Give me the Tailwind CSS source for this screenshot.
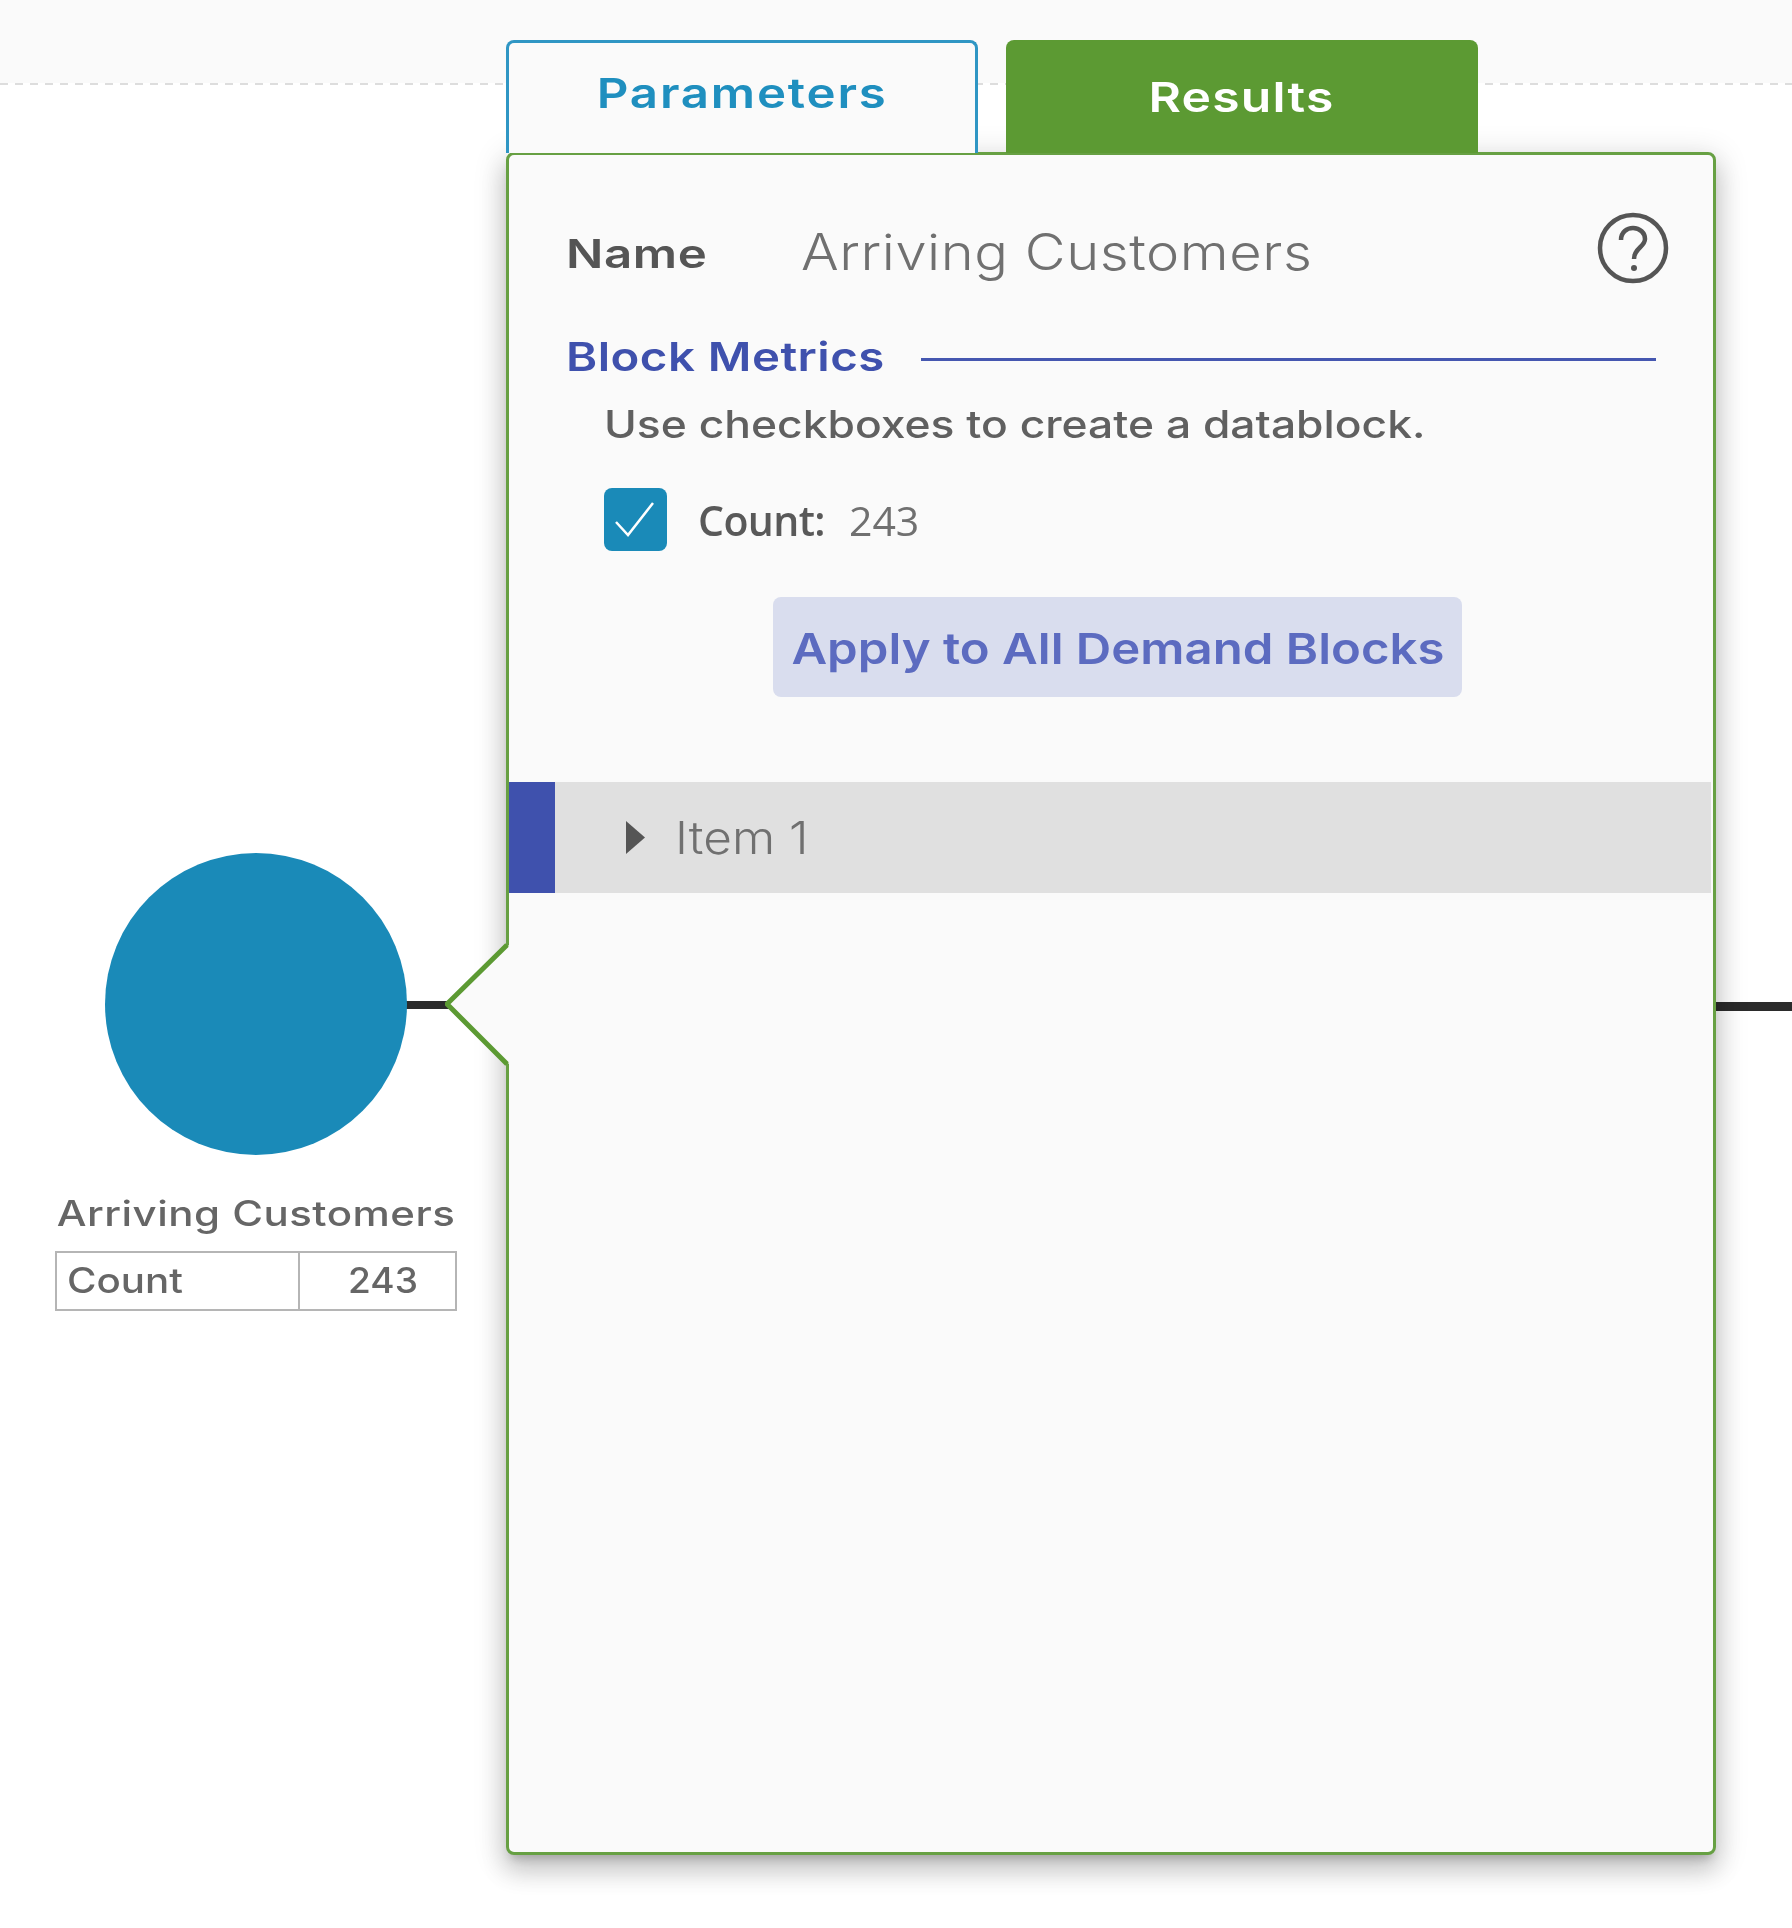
<!DOCTYPE html>
<html lang="en">
<head>
    <meta charset="UTF-8">
    <title>Arriving Customers</title>
    <script src="https://cdn.jsdelivr.net/npm/@tailwindcss/browser@4"></script>
</head>
<body class="bg-white font-['Inter',sans-serif]">
    <div class="relative w-[1792px] h-[1928px] overflow-hidden bg-white blur-[0.6px]">
        <!-- top band -->
        <div class="h-[83px] bg-[#fafafa]"></div>
        <div class="h-[2px] bg-[repeating-linear-gradient(90deg,#dddddd_0_8px,transparent_8px_15px)]"></div>

        <!-- connector lines -->
        <div class="absolute left-[400px] top-[1001px] w-[50px] h-[8px] bg-[#2b2b2b]"></div>
        <div class="absolute left-[1710px] top-[1002px] w-[82px] h-[9px] bg-[#2b2b2b]"></div>

        <!-- demand block -->
        <div class="absolute left-[55px] top-[853px] w-[402px] flex flex-col items-center">
            <div class="w-[302px] h-[302px] rounded-full bg-[#1a8ab8]"></div>
            <div class="mt-[38px] h-[40px] leading-[40px] text-[35px] font-medium tracking-[0.4px] text-[#666666] whitespace-nowrap scale-x-[1.2]">Arriving Customers</div>
            <div class="mt-[18px] w-full h-[60px] flex border-2 border-[#b5b5b5] text-[35px] font-medium text-[#666666] leading-[54px] bg-white">
                <div class="w-[243px] pl-[10px] border-r-2 border-[#b5b5b5]"><span class="inline-block origin-left scale-x-[1.15]">Count</span></div>
                <div class="pl-[48px]"><span class="inline-block origin-left scale-x-[1.06]">243</span></div>
            </div>
        </div>

        <!-- tabs + panel -->
        <div class="absolute left-[506px] top-[40px] w-[1210px]">
            <div class="relative z-10 flex gap-[28px] h-[113px]">
                <div class="w-[472px] h-full rounded-t-[8px] border-[3px] border-b-0 border-[#2f96c4] bg-[#fafafa] text-center text-[#1f8fbf] text-[41px] font-semibold tracking-[1.5px] leading-[100px]"><span class="inline-block scale-x-[1.2]">Parameters</span></div>
                <div class="w-[472px] h-full rounded-t-[8px] bg-[#5c9a33] text-center text-white text-[41px] font-semibold tracking-[1px] leading-[114px]"><span class="inline-block scale-x-[1.216]">Results</span></div>
            </div>
            <div class="relative -mt-px h-[1703px] bg-[#fafafa] border-[3px] border-[#67a043] rounded-[8px] shadow-[0_8px_10px_-5px_rgba(0,0,0,0.2),0_16px_24px_2px_rgba(0,0,0,0.14),0_6px_30px_5px_rgba(0,0,0,0.12)]">
                <div class="pt-[68px] pl-[57px]">
                    <div class="flex items-center h-[60px]">
                        <span class="w-[235px] text-[#555555] text-[40px] font-semibold tracking-[0.5px] pt-[2px]"><span class="inline-block origin-left scale-x-[1.23]">Name</span></span>
                        <span class="text-[#707070] text-[50px] font-light tracking-[0.5px] pb-[2px] origin-left scale-x-[1.12] whitespace-nowrap">Arriving Customers</span>
                    </div>
                    <div class="mt-[54px] flex items-center h-[40px]">
                        <div class="w-[355px]"><span class="inline-block origin-left text-[#3f51ad] text-[40px] font-semibold tracking-[0.4px] whitespace-nowrap scale-x-[1.184]">Block Metrics</span></div>
                        <div class="w-[735px] h-[3px] mt-[5px] bg-[#4557b0]"></div>
                    </div>
                    <p class="mt-[27px] ml-[38px] h-[40px] leading-[40px] text-[#606060] text-[38px] font-medium whitespace-nowrap origin-left scale-x-[1.168]">Use checkboxes to create a datablock.</p>
                    <div class="mt-[44px] ml-[38px] flex items-center h-[63px]">
                        <div class="w-[63px] h-[63px] rounded-[8px] bg-[#1a8ab8] flex items-center justify-center">
                            <svg width="63" height="63" viewBox="0 0 63 63" fill="none" stroke="#ffffff" stroke-width="2.5"><path d="M12 34L24 47L49 15"/></svg>
                        </div>
                        <span class="ml-[31px] text-[#595959] text-[41px] font-semibold font-['Open_Sans',sans-serif] tracking-[-0.6px] pt-[2px]">Count:</span>
                        <span class="ml-[24px] text-[#707070] text-[41px] font-['Open_Sans',sans-serif] pt-[2px]">243</span>
                    </div>
                    <div class="mt-[46px] ml-[207px] w-[689px] h-[100px] rounded-[8px] bg-[#d9ddee] flex items-center justify-center text-[#5c6bc0] text-[43px] font-semibold whitespace-nowrap pt-[2px]"><span class="inline-block scale-x-[1.142]">Apply to All Demand Blocks</span></div>
                </div>
                <!-- item row -->
                <div class="mt-[85px] mr-[2px] h-[111px] flex items-center bg-[#e0e0e0]">
                    <div class="w-[46px] h-full bg-[#3f51ad]"></div>
                    <svg class="ml-[71px]" width="19" height="33" viewBox="0 0 19 33"><path d="M0 0L19 16.5L0 33Z" fill="#555555"/></svg>
                    <span class="ml-[30px] text-[#707070] text-[45px] font-light origin-left scale-x-[1.1]">Item 1</span>
                </div>
                <!-- help icon -->
                <svg class="absolute right-[44px] top-[57px]" width="72" height="72" viewBox="0 0 72 72" fill="none" stroke="#555555" stroke-width="4.5">
                    <circle cx="36" cy="36" r="33"/>
                    <path d="M24 28C24 20 30 16 36 16C43 16 48 21 48 27C48 35 37 36 37 47"/>
                    <circle cx="37" cy="56" r="3" fill="#555555" stroke="none"/>
                </svg>
            </div>
            <!-- pointer to block -->
            <svg class="absolute left-[-61px] top-[903px]" width="66" height="124" viewBox="0 0 66 124">
                <path d="M64 2L2 61L64 121Z" fill="#fafafa" stroke="none"/>
                <path d="M62 2L2 61L62 121" fill="none" stroke="#5c9a33" stroke-width="5"/>
            </svg>
        </div>
    </div>
</body>
</html>
